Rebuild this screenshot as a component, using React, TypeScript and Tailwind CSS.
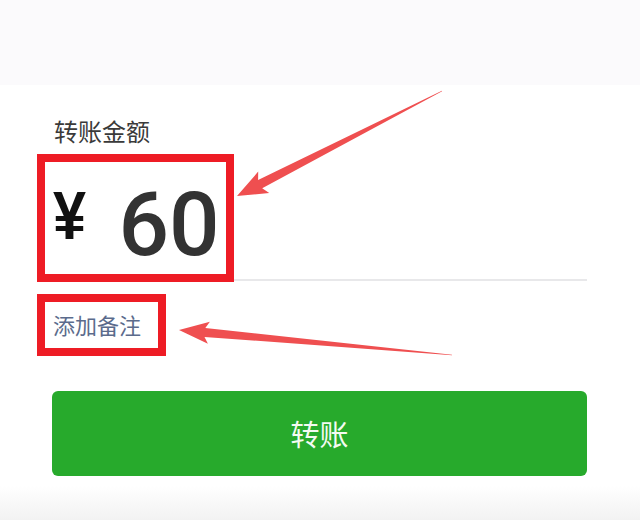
import React from "react";

type Pt = [number, number];

function arrowPoints(tail: Pt, tip: Pt, headLen: number, headW: number, shaftW: number, tailW: number, notch: number): string {
  const dx = tip[0] - tail[0];
  const dy = tip[1] - tail[1];
  const len = Math.hypot(dx, dy);
  const ux = dx / len;
  const uy = dy / len;
  const nx = -uy;
  const ny = ux;
  const bx = tip[0] - ux * headLen;
  const by = tip[1] - uy * headLen;
  const pts: Pt[] = [
    [tail[0] + (nx * tailW) / 2, tail[1] + (ny * tailW) / 2],
    [bx + ux * notch + (nx * shaftW) / 2, by + uy * notch + (ny * shaftW) / 2],
    [bx + (nx * headW) / 2, by + (ny * headW) / 2],
    tip,
    [bx - (nx * headW) / 2, by - (ny * headW) / 2],
    [bx + ux * notch - (nx * shaftW) / 2, by + uy * notch - (ny * shaftW) / 2],
    [tail[0] - (nx * tailW) / 2, tail[1] - (ny * tailW) / 2],
  ];
  return pts.map((p) => `${p[0].toFixed(1)},${p[1].toFixed(1)}`).join(" ");
}

export default function App() {
  return (
    <div
      className="relative w-[640px] h-[520px] overflow-hidden bg-white"
      style={{ fontFamily: '"Noto Sans CJK SC", "Noto Sans", sans-serif' }}
    >
      <div className="h-[85px] bg-[#fbfafc]" />
      <div className="flex flex-col pl-[37px] pr-[53px]">
        <div className="ml-[17px] mt-[28px] text-[24px] leading-[36px] text-[#3a3a3a]">转账金额</div>
        <div className="mt-[5px] flex items-end">
          <div className="flex h-[128px] w-[197px] shrink-0 items-center border-[8px] border-[#ee1c25] pl-[8px]">
            <span
              className="inline-block origin-left scale-x-[0.86] text-[69px] font-bold leading-none text-[#111] mt-[-6px]"
              style={{ fontFamily: '"Liberation Sans", Arial, sans-serif' }}
            >
              ¥
            </span>
            <span
              className="ml-[27px] text-[89px] font-medium leading-none text-[#333333] mt-[12px]"
              style={{ fontFamily: 'Roboto, "Liberation Sans", sans-serif' }}
            >
              60
            </span>
          </div>
          <div className="mb-[1px] h-[2px] flex-1 bg-[#e8e8ea]" />
        </div>
        <div className="mt-[12px] flex h-[62px] w-[129px] items-center border-[8px] border-[#ee1c25] pl-[8px] pb-[2px]">
          <span className="text-[22px] leading-none text-[#5b6b8c] whitespace-nowrap">添加备注</span>
        </div>
        <button className="ml-[15px] mt-[35px] flex h-[85px] w-[535px] items-center justify-center rounded-[6px] bg-[#27aa2c] text-[29px] text-[#f4fbf2]">
          转账
        </button>
      </div>
      <div className="absolute bottom-0 left-0 h-[34px] w-full bg-gradient-to-b from-white to-[#f2f2f2]" />
      <svg className="pointer-events-none absolute left-0 top-0" width="640" height="520" viewBox="0 0 640 520">
        <polygon
          points={arrowPoints([442, 91], [237, 196], 30, 24, 9, 0.6, 4)}
          fill="#ef4f50"
        />
        <polygon
          points={arrowPoints([452, 355], [179, 330], 30, 22, 9, 0.6, 4)}
          fill="#ef4f50"
        />
      </svg>
    </div>
  );
}
